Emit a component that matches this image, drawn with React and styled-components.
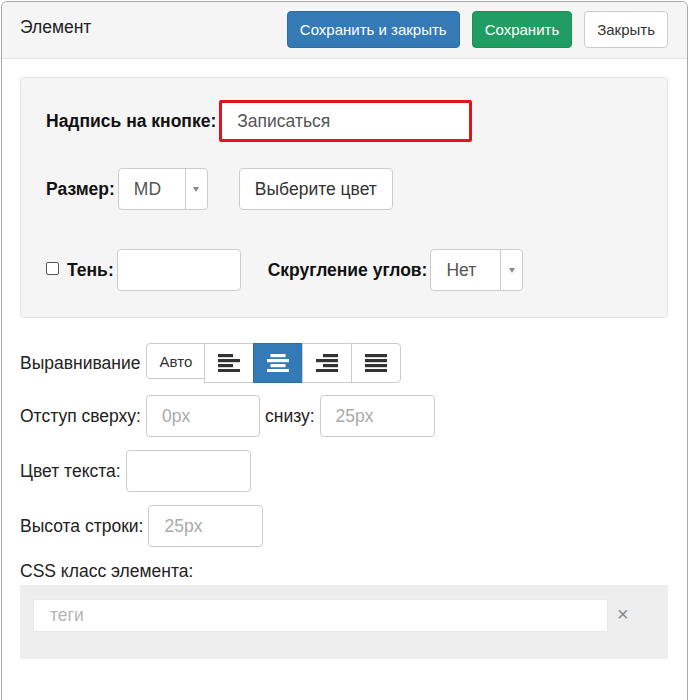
import React from 'react';
import styled, { createGlobalStyle } from 'styled-components';

const GlobalStyle = createGlobalStyle`
    html, body {
        margin: 0;
        background: #fff;
        font-family: "Liberation Sans", Arial, sans-serif;
        color: #333;
    }
`;

const AlignIcon = ({ mode, color }) => {
    const widths = mode === 'justify' ? [22, 22, 22, 22] : [15, 22, 15, 22];
    return (
        <svg width="22" height="18" viewBox="0 0 22 18">
            {widths.map((w, i) => {
                let x = 0;
                if (mode === 'center') x = (22 - w) / 2;
                if (mode === 'right') x = 22 - w;
                return <rect key={i} x={x} y={i * 5} width={w} height="3.2" fill={color} />;
            })}
        </svg>
    );
};

const App = () => {
    const alignModes = ['left', 'center', 'right', 'justify'];

    return (
        <>
            <GlobalStyle />
            <Modal>
                <Header>
                    <Title>Элемент</Title>
                    <HeaderActions>
                        <Button variant="primary">Сохранить и закрыть</Button>
                        <Button variant="success">Сохранить</Button>
                        <Button>Закрыть</Button>
                    </HeaderActions>
                </Header>

                <Body>
                    <Well>
                        <Row top={22}>
                            <BoldLabel>Надпись на кнопке:</BoldLabel>
                            <TextInput width={253} highlighted defaultValue="Записаться" />
                        </Row>

                        <Row top={26}>
                            <BoldLabel>Размер:</BoldLabel>
                            <Select width={90}>
                                <SelectValue>MD</SelectValue>
                                <SelectArrow><Caret /></SelectArrow>
                            </Select>
                            <ColorButton>Выберите цвет</ColorButton>
                        </Row>

                        <Row top={39}>
                            <CheckLabel>
                                <CheckBox />
                                <BoldLabel>Тень:</BoldLabel>
                            </CheckLabel>
                            <TextInput width={124} />
                            <BoldLabel spaced>Скругление углов:</BoldLabel>
                            <Select width={93}>
                                <SelectValue>Нет</SelectValue>
                                <SelectArrow><Caret /></SelectArrow>
                            </Select>
                        </Row>
                    </Well>

                    <PlainRow top={25}>
                        <Label>Выравнивание</Label>
                        <ButtonGroup>
                            <AutoButton>Авто</AutoButton>
                            {alignModes.map((mode) => (
                                <IconButton key={mode} active={mode === 'center'}>
                                    <AlignIcon mode={mode} color={mode === 'center' ? '#fff' : '#333'} />
                                </IconButton>
                            ))}
                        </ButtonGroup>
                    </PlainRow>

                    <PlainRow top={12}>
                        <Label>Отступ сверху:</Label>
                        <TextInput width={114} placeholder="0px" />
                        <Label>снизу:</Label>
                        <TextInput width={115} placeholder="25px" />
                    </PlainRow>

                    <PlainRow top={13}>
                        <Label>Цвет текста:</Label>
                        <TextInput width={125} />
                    </PlainRow>

                    <PlainRow top={13}>
                        <Label>Высота строки:</Label>
                        <TextInput width={115} placeholder="25px" />
                    </PlainRow>

                    <BlockLabel>CSS класс элемента:</BlockLabel>
                    <TagsBox>
                        <TagsInput placeholder="теги" />
                        <ClearMark>×</ClearMark>
                    </TagsBox>
                </Body>
            </Modal>
        </>
    );
};

// START: Styled Components
const Modal = styled.div`
    width: 687px;
    height: 699px;
    margin: 1px 0 0 1px;
    border: 1px solid #a9a9a9;
    border-bottom: none;
    border-radius: 6px 6px 0 0;
    overflow: hidden;
    box-sizing: border-box;
`;

const Header = styled.div`
    height: 57px;
    box-sizing: border-box;
    padding: 9px 19px 0 18px;
    background: #f5f5f5;
    border-bottom: 1px solid #e5e5e5;
    display: flex;
    justify-content: space-between;
    align-items: flex-start;
`;

const Title = styled.div`
    font-size: 17.5px;
    line-height: 20px;
    padding-top: 6px;
    color: #222;
`;

const HeaderActions = styled.div`
    display: flex;
    gap: 12px;
`;

const buttonColors = {
    primary: { bg: '#337ab7', border: '#2e6da4', color: '#fff' },
    success: { bg: '#1f9d63', border: '#1a8d58', color: '#fff' },
    default: { bg: '#fff', border: '#ccc', color: '#333' },
};

const Button = styled.button`
    height: 37px;
    padding: 0 12px;
    font-family: inherit;
    font-size: 15px;
    border-radius: 4px;
    border: 1px solid ${(p) => buttonColors[p.variant || 'default'].border};
    background: ${(p) => buttonColors[p.variant || 'default'].bg};
    color: ${(p) => buttonColors[p.variant || 'default'].color};
    cursor: pointer;
`;

const ColorButton = styled(Button)`
    height: 42px;
    margin-left: 31px;
    padding: 0 15px;
    font-size: 17.5px;
`;

const Body = styled.div`
    padding: 18px 19px 0 18px;
`;

const Well = styled.div`
    height: 241px;
    box-sizing: border-box;
    padding: 0 25px;
    background: #f5f5f5;
    border: 1px solid #e3e3e3;
    border-radius: 4px;
`;

const Row = styled.div`
    display: flex;
    align-items: center;
    margin-top: ${(p) => p.top}px;
    line-height: 20px;
`;

const PlainRow = styled(Row)`
    gap: 5px;
`;

const BoldLabel = styled.span`
    font-size: 17.5px;
    font-weight: bold;
    color: #111;
    margin-right: 3px;
    margin-left: ${(p) => (p.spaced ? 27 : 0)}px;
`;

const Label = styled.span`
    font-size: 17.5px;
    color: #222;
`;

const BlockLabel = styled.div`
    font-size: 17.5px;
    color: #222;
    margin-top: 14px;
    line-height: 20px;
`;

const TextInput = styled.input`
    width: ${(p) => p.width}px;
    height: 42px;
    box-sizing: border-box;
    padding: 0 15px;
    font-family: inherit;
    font-size: 17.5px;
    color: #555;
    background: #fff;
    border: ${(p) => (p.highlighted ? '3px solid #e0141b' : '1px solid #ccc')};
    border-radius: ${(p) => (p.highlighted ? 2 : 4)}px;
    outline: none;

    &::placeholder {
        color: #aaa;
    }
`;

const Select = styled.div`
    width: ${(p) => p.width}px;
    height: 42px;
    box-sizing: border-box;
    display: flex;
    background: #fff;
    border: 1px solid #ccc;
    border-radius: 4px;
`;

const SelectValue = styled.div`
    flex: 1;
    display: flex;
    align-items: center;
    padding-left: 15px;
    font-size: 17.5px;
    color: #555;
`;

const SelectArrow = styled.div`
    width: 21px;
    border-left: 1px solid #ccc;
    display: flex;
    align-items: center;
    justify-content: center;
`;

const Caret = styled.span`
    width: 0;
    height: 0;
    border-left: 3.5px solid transparent;
    border-right: 3.5px solid transparent;
    border-top: 5px solid #888;
`;

const CheckLabel = styled.label`
    display: flex;
    align-items: center;
    gap: 8px;
`;

const CheckBox = styled.span`
    width: 11px;
    height: 11px;
    border: 1px solid #555;
    border-radius: 2px;
    background: #fff;
    margin-top: -4px;
`;

const ButtonGroup = styled.div`
    display: flex;
    align-items: flex-start;
    margin-left: 1px;
`;

const AutoButton = styled.button`
    width: 59px;
    height: 36px;
    font-family: inherit;
    font-size: 15px;
    color: #333;
    background: #fff;
    border: 1px solid #ccc;
    border-radius: 4px 0 0 4px;
`;

const IconButton = styled.button`
    width: 50px;
    height: 40px;
    margin-left: -1px;
    display: flex;
    align-items: center;
    justify-content: center;
    background: ${(p) => (p.active ? '#337ab7' : '#fff')};
    border: 1px solid ${(p) => (p.active ? '#2e6da4' : '#ccc')};
    border-radius: 0;

    &:last-child {
        border-radius: 0 4px 4px 0;
    }
`;

const TagsBox = styled.div`
    margin-top: 4px;
    height: 74px;
    box-sizing: border-box;
    padding: 14px 13px;
    background: #eee;
    display: flex;
    align-items: flex-start;
    gap: 9px;
`;

const TagsInput = styled.input`
    width: 575px;
    height: 33px;
    box-sizing: border-box;
    padding: 0 16px;
    font-family: inherit;
    font-size: 17.5px;
    border: 1px solid #e8e8e8;
    border-radius: 2px;
    background: #fff;
    outline: none;

    &::placeholder {
        color: #b5b5b5;
    }
`;

const ClearMark = styled.span`
    font-size: 20px;
    line-height: 30px;
    color: #888;
`;
// END: Styled Components

export default App;
